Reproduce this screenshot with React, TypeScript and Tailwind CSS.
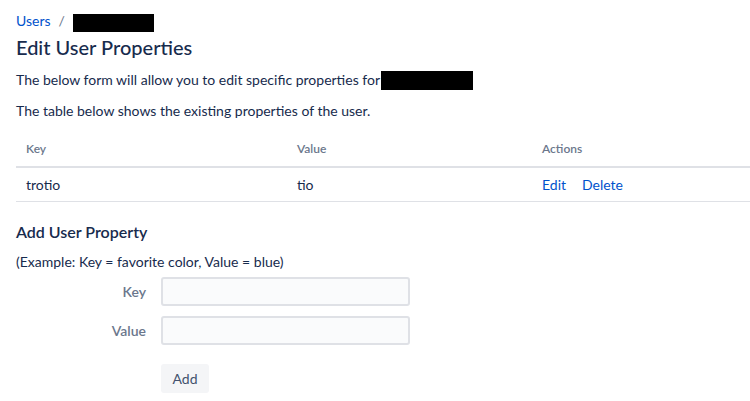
export default function App() {
  return (
    <div
      className="min-h-screen bg-white px-4 text-[14px] text-[#172b4d]"
      style={{ fontFamily: 'Lato, "Noto Sans", sans-serif' }}
    >
      <div className="flex h-[32px] items-end gap-[8px] pb-[1px] text-[14px]">
        <a className="cursor-pointer text-[#0052cc]">Users</a>
        <span className="text-[#6b778c]">/</span>
        <span className="mb-[-1px] inline-block h-[18px] w-[81px] bg-black" />
      </div>
      <h1 className="mt-[2px] text-[20px] font-medium leading-[26px]">Edit User Properties</h1>
      <p className="mt-[10px] flex items-center leading-[20px]">
        The below form will allow you to edit specific properties for
        <span className="ml-[1px] inline-block h-[19px] w-[92px] bg-black" />
      </p>
      <p className="mt-[11px] leading-[20px]">The table below shows the existing properties of the user.</p>

      <table className="mt-[18px] w-[734px] border-collapse text-left">
        <thead>
          <tr className="border-b-2 border-[#dfe1e6]">
            <th className="h-[28px] w-[271px] px-[10px] pb-[8px] align-bottom text-[12px] font-semibold text-[#6b778c]">Key</th>
            <th className="w-[245px] px-[10px] pb-[8px] align-bottom text-[12px] font-semibold text-[#6b778c]">Value</th>
            <th className="px-[10px] pb-[8px] align-bottom text-[12px] font-semibold text-[#6b778c]">Actions</th>
          </tr>
        </thead>
        <tbody>
          <tr className="border-b border-[#dfe1e6]">
            <td className="h-[34px] px-[10px]">trotio</td>
            <td className="px-[10px]">tio</td>
            <td className="px-[10px]">
              <a className="cursor-pointer text-[#0052cc]">Edit</a>
              <a className="ml-[16px] cursor-pointer text-[#0052cc]">Delete</a>
            </td>
          </tr>
        </tbody>
      </table>

      <h2 className="mt-[19px] text-[16px] font-semibold leading-[22px]">Add User Property</h2>
      <p className="mt-[9px] leading-[20px]">(Example: Key = favorite color, Value = blue)</p>

      <form className="mt-[5px] flex flex-col gap-[10px]">
        <div className="flex items-center">
          <label className="w-[145px] pr-[15px] text-right font-semibold text-[#6b778c]">Key</label>
          <input className="h-[29px] w-[249px] rounded-[3px] border-2 border-[#dfe1e6] bg-[#fafbfc] px-[6px] outline-none" />
        </div>
        <div className="flex items-center">
          <label className="w-[145px] pr-[15px] text-right font-semibold text-[#6b778c]">Value</label>
          <input className="h-[29px] w-[249px] rounded-[3px] border-2 border-[#dfe1e6] bg-[#fafbfc] px-[6px] outline-none" />
        </div>
        <div className="mt-[9px] pl-[145px]">
          <button type="button" className="h-[29px] w-[48px] rounded-[3px] bg-[#f4f5f7] text-[#42526e]">
            Add
          </button>
        </div>
      </form>
    </div>
  );
}
